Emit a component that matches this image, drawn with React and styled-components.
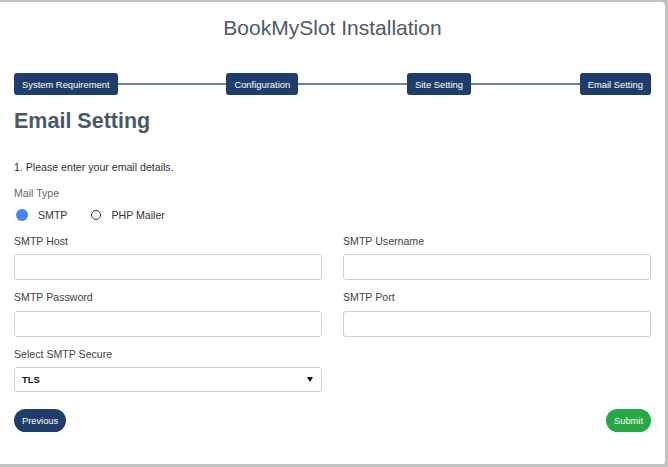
import React from 'react';
import styled, { createGlobalStyle } from 'styled-components';

const GlobalStyle = createGlobalStyle`
  html, body {
    margin: 0;
    padding: 0;
    background-color: #c2c2c2;
    font-family: "Liberation Sans", Arial, sans-serif;
  }
`;

const Card = styled.div`
  margin-top: 2px;
  width: 665px;
  height: 462px;
  box-sizing: border-box;
  background-color: white;
  border-radius: 0 4px 3px 0;
  padding: 14px 14px 0 14px;
`;

const Title = styled.h1`
  margin: 0;
  font-size: 21px;
  line-height: 24px;
  font-weight: normal;
  text-align: center;
  color: #4e5a68;
`;

const Stepper = styled.div`
  margin-top: 33px;
  display: flex;
  align-items: center;
  height: 22px;
`;

const Step = styled.div`
  height: 22px;
  padding: 0 8px;
  display: flex;
  align-items: center;
  background-color: #1f3d6a;
  color: white;
  font-size: 9.4px;
  border-radius: 3px;
  white-space: nowrap;
`;

const Connector = styled.div`
  flex: 1;
  height: 2px;
  background-color: #6f7f9c;
`;

const Heading = styled.h2`
  margin: 12.5px 0 0 0;
  font-size: 21.5px;
  line-height: 26px;
  font-weight: bold;
  color: #4a5867;
`;

const Intro = styled.p`
  margin: 27px 0 0 0;
  font-size: 10.6px;
  line-height: 13px;
  color: #333;
`;

const SmallLabel = styled.div`
  margin-top: ${(p) => p.$top || 0}px;
  font-size: 10.6px;
  line-height: 13px;
  color: ${(p) => p.$muted ? '#666' : '#444'};
`;

const RadioRow = styled.div`
  margin-top: 9px;
  display: flex;
  align-items: center;
  height: 13px;
`;

const RadioOption = styled.label`
  display: flex;
  align-items: center;
  font-size: 10.6px;
  color: #333;
  margin-right: 24px;
  margin-left: ${(p) => p.$first ? '2px' : '0'};
`;

const RadioDot = styled.span`
  width: ${(p) => p.$checked ? '12px' : '8px'};
  height: ${(p) => p.$checked ? '12px' : '8px'};
  border-radius: 50%;
  box-sizing: content-box;
  background-color: ${(p) => p.$checked ? '#4285f4' : 'white'};
  border: ${(p) => p.$checked ? 'none' : '1.5px solid #333'};
  margin-right: 10px;
`;

const FieldGrid = styled.div`
  margin-top: 13px;
  display: grid;
  grid-template-columns: 1fr 1fr;
  column-gap: 21px;
  row-gap: 11px;
`;

const Field = styled.div`
  display: flex;
  flex-direction: column;
`;

const FieldLabel = styled.label`
  font-size: 10.6px;
  line-height: 13px;
  color: #444;
  margin-bottom: 6.5px;
`;

const TextInput = styled.input`
  height: 26px;
  box-sizing: border-box;
  border: 1px solid #cdd1d6;
  border-radius: 3px;
  padding: 0 7px;
  font-family: inherit;
  font-size: 10.6px;
  outline: none;
`;

const SelectBox = styled.div`
  height: 25px;
  box-sizing: border-box;
  border: 1px solid #cdd1d6;
  border-radius: 3px;
  padding: 0 8px 0 7px;
  display: flex;
  align-items: center;
  justify-content: space-between;
  font-size: 9.5px;
  font-weight: bold;
  color: #111;
`;

const Actions = styled.div`
  margin-top: 17px;
  display: flex;
  justify-content: space-between;
`;

const PillButton = styled.button`
  height: 23px;
  padding: 0 8px;
  border: none;
  border-radius: 12px;
  background-color: ${(p) => p.$variant === 'success' ? '#28a745' : '#1f3d6a'};
  color: white;
  font-family: inherit;
  font-size: 9.3px;
  cursor: pointer;
`;

const steps = ['System Requirement', 'Configuration', 'Site Setting', 'Email Setting'];

const App = () => {
  return (
    <>
      <GlobalStyle />
      <Card>
        <Title>BookMySlot Installation</Title>
        <Stepper>
          {steps.map((s, i) => (
            <React.Fragment key={s}>
              {i > 0 && <Connector />}
              <Step>{s}</Step>
            </React.Fragment>
          ))}
        </Stepper>
        <Heading>Email Setting</Heading>
        <Intro>1. Please enter your email details.</Intro>
        <SmallLabel $top={13} $muted>Mail Type</SmallLabel>
        <RadioRow>
          <RadioOption $first>
            <RadioDot $checked />
            SMTP
          </RadioOption>
          <RadioOption>
            <RadioDot />
            PHP Mailer
          </RadioOption>
        </RadioRow>
        <FieldGrid>
          <Field>
            <FieldLabel>SMTP Host</FieldLabel>
            <TextInput />
          </Field>
          <Field>
            <FieldLabel>SMTP Username</FieldLabel>
            <TextInput />
          </Field>
          <Field>
            <FieldLabel>SMTP Password</FieldLabel>
            <TextInput type="password" />
          </Field>
          <Field>
            <FieldLabel>SMTP Port</FieldLabel>
            <TextInput />
          </Field>
          <Field>
            <FieldLabel>Select SMTP Secure</FieldLabel>
            <SelectBox>
              <span>TLS</span>
              <svg width="6" height="5" viewBox="0 0 6 5">
                <path d="M0 0 L6 0 L3 5 Z" fill="#111" />
              </svg>
            </SelectBox>
          </Field>
        </FieldGrid>
        <Actions>
          <PillButton>Previous</PillButton>
          <PillButton $variant="success">Submit</PillButton>
        </Actions>
      </Card>
    </>
  );
};

export default App;
